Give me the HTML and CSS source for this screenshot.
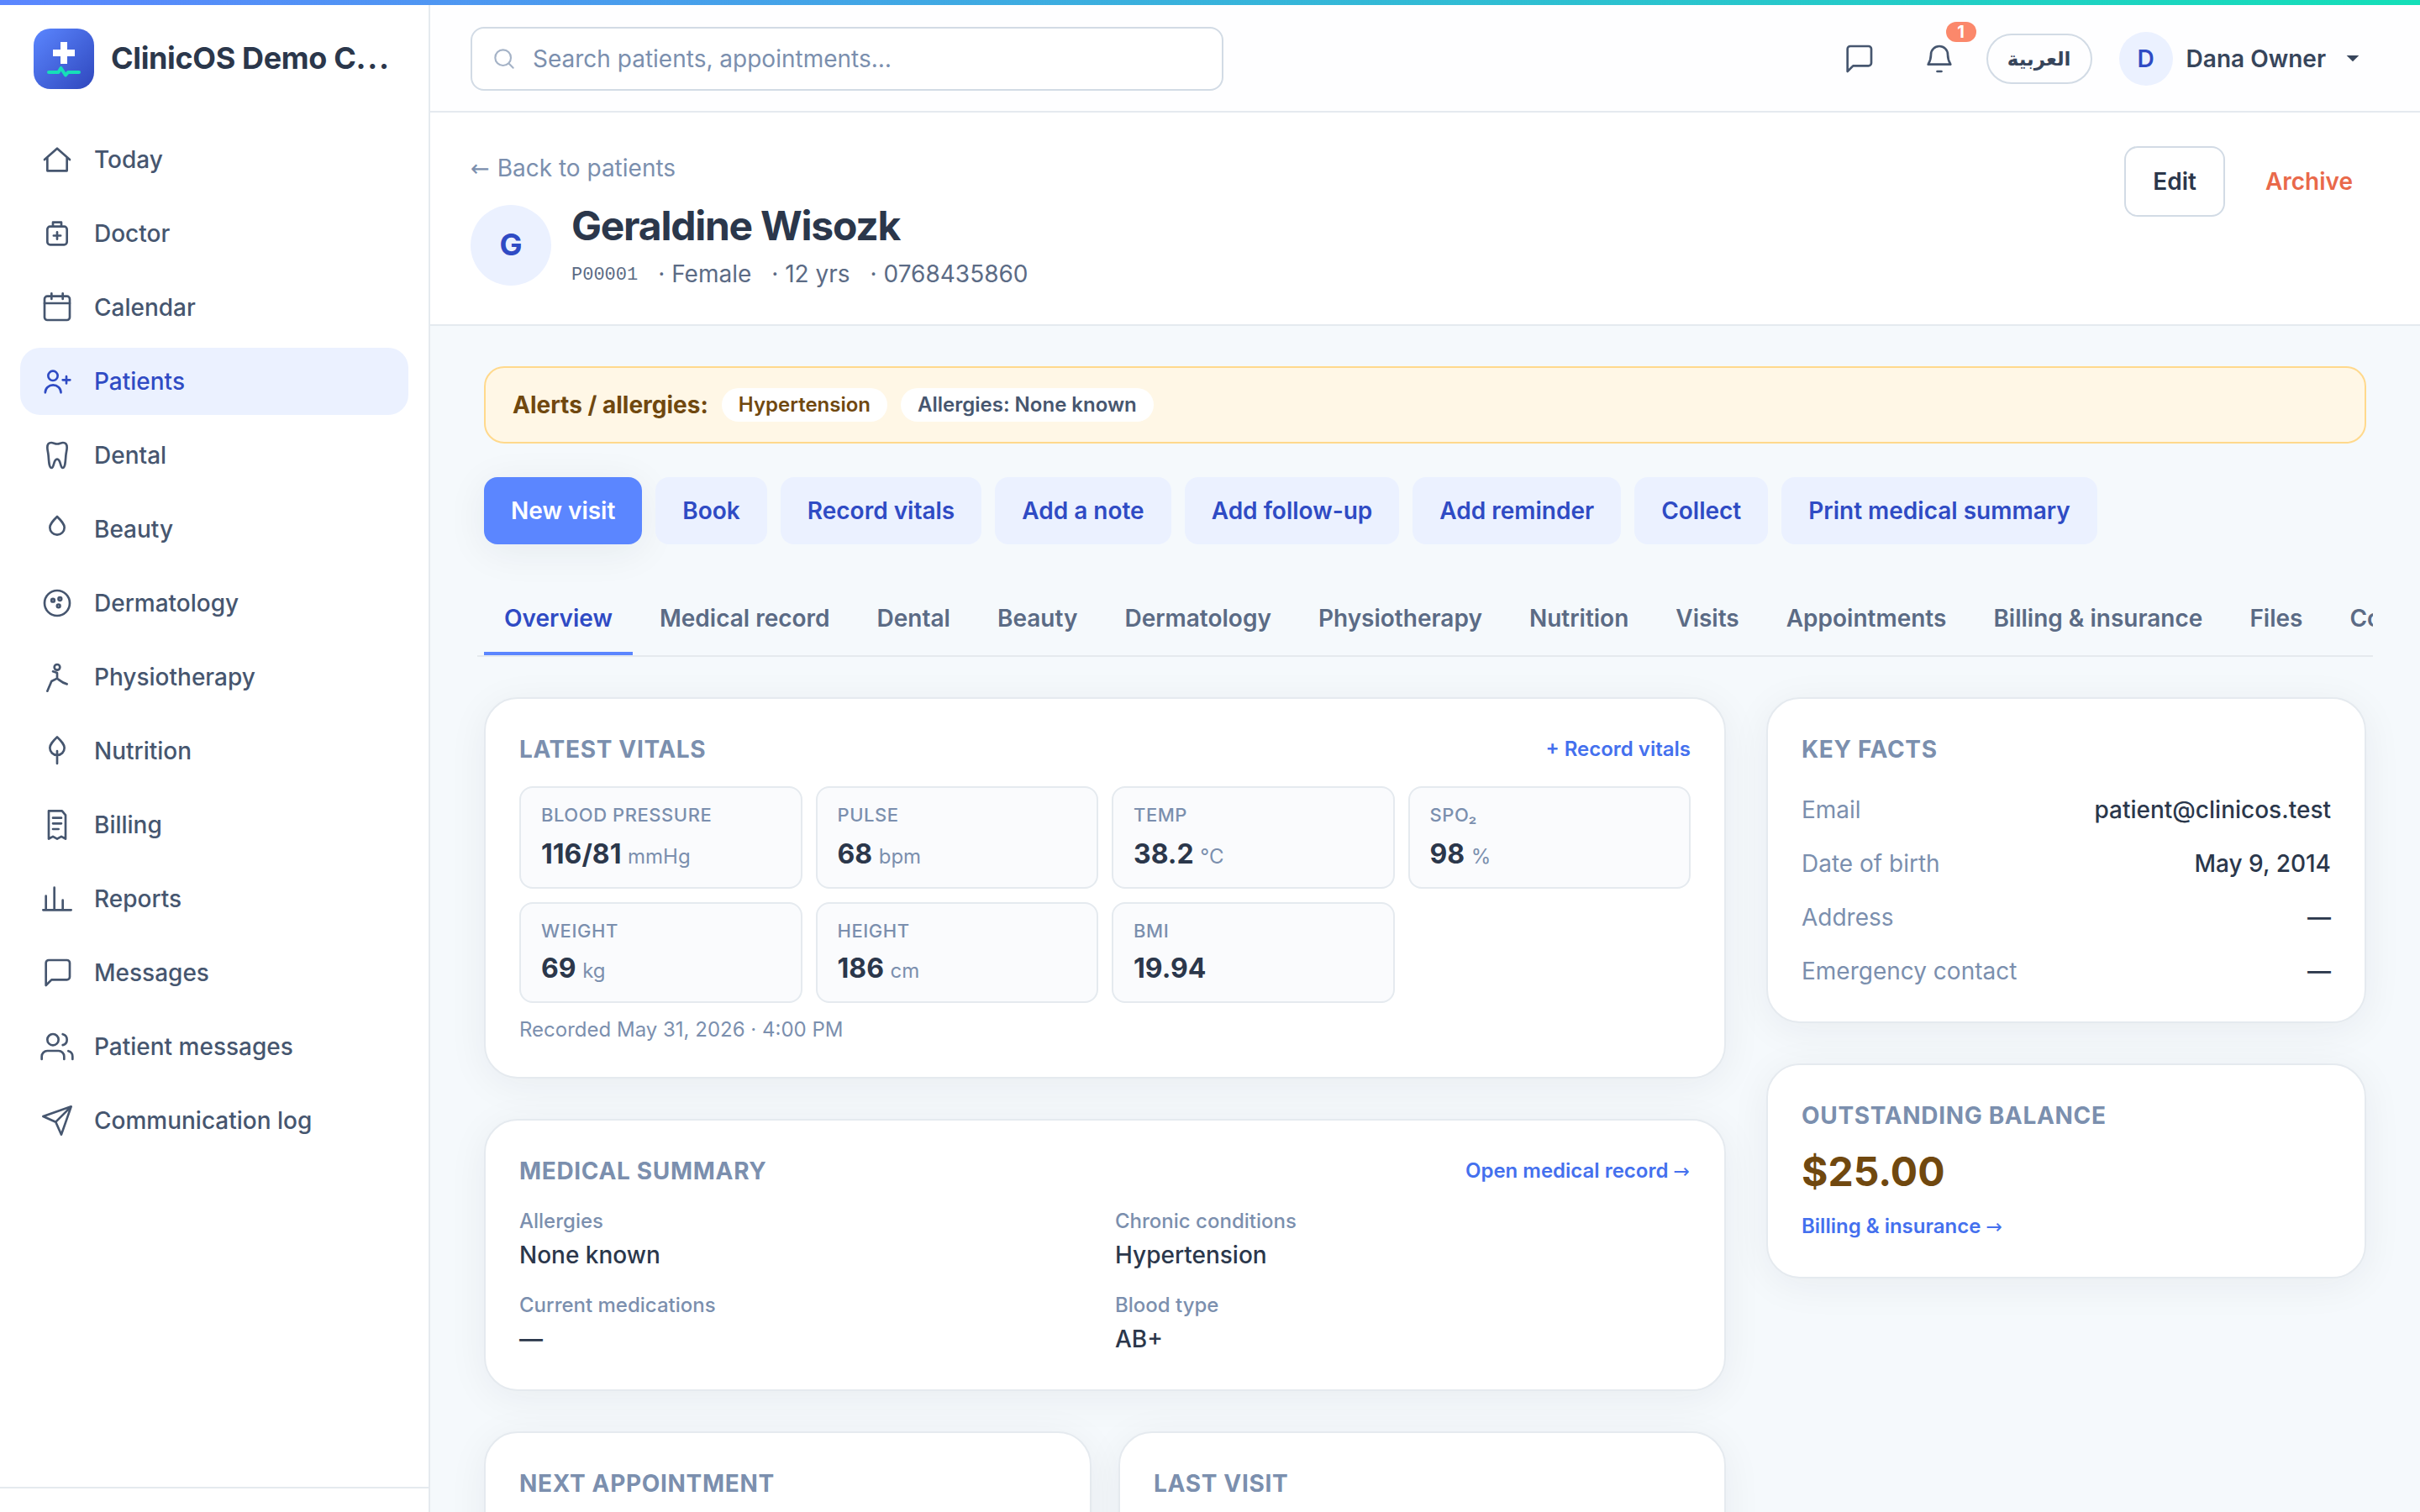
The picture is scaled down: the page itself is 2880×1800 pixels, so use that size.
FILE: index.html
```html
<!DOCTYPE html>
<html lang="en">
  <head>
    <meta charset="UTF-8" />
    <meta name="viewport" content="width=device-width,initial-scale=1" />
    <title>Geraldine Wisozk - ClinicOS</title>
    <link rel="stylesheet" href="styles.css">
  </head>
  <body>
    <div class="accent-bar"></div>
    <div class="app">
      <aside class="sidebar">
        <div class="brand">
          <svg class="brand-logo" viewBox="0 0 72 72">
            <defs>
              <linearGradient id="logo" x1="0" y1="0" x2="1" y2="1">
                <stop offset="0" stop-color="#5b86ff" />
                <stop offset="1" stop-color="#2f47bd" />
              </linearGradient>
            </defs>
            <rect width="72" height="72" rx="20" fill="url(#logo)" />
            <path d="M32 16h8v9h9v8h-9v9h-8v-9h-9v-8h9z" fill="#fff" />
            <path d="M18 52h11.5l3-5 5.5 8.5 3-3.5h13" fill="none" stroke="#16dfb8" stroke-width="4" stroke-linecap="round" stroke-linejoin="round" />
          </svg>
          <span class="brand-name">ClinicOS Demo C<span class="dots">...</span></span>
        </div>
        <nav class="nav">
          <a class="nav-item"><svg class="icon" viewBox="0 0 24 24"><path d="M3 12l9-8 9 8M5 10.5V20h14v-9.5" /></svg>Today</a>
          <a class="nav-item"><svg class="icon" viewBox="0 0 24 24"><rect x="5" y="7" width="14" height="13" rx="2" /><path d="M9 7V4h6v3M12 11v5M9.5 13.5h5" /></svg>Doctor</a>
          <a class="nav-item"><svg class="icon" viewBox="0 0 24 24"><rect x="3" y="4" width="18" height="17" rx="2" /><path d="M3 9h18M8 2v4M16 2v4" /></svg>Calendar</a>
          <a class="nav-item active"><svg class="icon" viewBox="0 0 24 24"><circle cx="9" cy="8" r="3.4" /><path d="M3.5 20a5.6 5.4 0 0 1 11.2 0M18.6 8.5v5M16 11h5.2" /></svg>Patients</a>
          <a class="nav-item"><svg class="icon" viewBox="0 0 24 24"><path d="M12 3.9c-1.8 0-2.6-.9-4.2-.9C6 3 5 4.4 5 6.4c0 2 .6 3.6.8 6.1C6.1 16.5 6.3 21 8 21c2 0 1.2-6.2 4-6.2S14 21 16 21c1.7 0 1.9-4.5 2.2-8.5.2-2.5.8-4.1.8-6.1 0-2-1-3.4-2.8-3.4-1.6 0-2.4.9-4.2.9z" /></svg>Dental</a>
          <a class="nav-item"><svg class="icon" viewBox="0 0 24 24"><path d="M12 3c3 3 5.2 5.2 5.2 7.8a5.2 5.2 0 0 1-10.4 0C6.8 8.2 9 6 12 3z" /></svg>Beauty</a>
          <a class="nav-item"><svg class="icon" viewBox="0 0 24 24"><circle cx="12" cy="12" r="9" /><circle cx="9" cy="10" r="1.1" /><circle cx="14" cy="9" r="1.1" /><circle cx="13" cy="14" r="1.1" /></svg>Dermatology</a>
          <a class="nav-item"><svg class="icon" viewBox="0 0 24 24"><circle cx="12" cy="5" r="2" /><path d="M9 8l3 1v4M12 13l-4 2-3 7M12 13c2 1.5 3.5 3.2 7 4" /></svg>Physiotherapy</a>
          <a class="nav-item"><svg class="icon" viewBox="0 0 24 24"><path d="M12 2c3 3 5.2 5.2 5.2 7.8a5.2 5.2 0 0 1-10.4 0C6.8 7.2 9 5 12 2zM12 12v9" /></svg>Nutrition</a>
          <a class="nav-item"><svg class="icon" viewBox="0 0 24 24"><path d="M6 2h9.5L18 5v17l-3-1.7-3 1.7-3-1.7L6 22zM9 7h6M9 11h6M9 15h4" /></svg>Billing</a>
          <a class="nav-item"><svg class="icon" viewBox="0 0 24 24"><path d="M2 20h20M4 20V10M10 20V4M16 20v-7" /></svg>Reports</a>
          <a class="nav-item"><svg class="icon" viewBox="0 0 24 24"><path d="M21 15a2 2 0 0 1-2 2H8l-4 4V5a2 2 0 0 1 2-2h13a2 2 0 0 1 2 2z" /></svg>Messages</a>
          <a class="nav-item"><svg class="icon" viewBox="0 0 24 24"><circle cx="9" cy="7" r="4" /><path d="M17 21v-2a4 4 0 0 0-4-4H5a4 4 0 0 0-4 4v2M23 21v-2a4 4 0 0 0-3-3.87M16 3.13a4 4 0 0 1 0 7.75" /></svg>Patient messages</a>
          <a class="nav-item"><svg class="icon" viewBox="0 0 24 24"><path d="M22 2l-7 20-4-9-9-4zM22 2L11 13" /></svg>Communication log</a>
        </nav>
        <div class="sidebar-footer"></div>
      </aside>

      <div class="main">
        <header class="topbar">
          <div class="search">
            <svg class="icon search-icon" viewBox="0 0 24 24"><circle cx="11" cy="11" r="7" /><path d="M20 20l-3.5-3.5" /></svg>
            <span>Search patients, appointments…</span>
          </div>
          <div class="topbar-actions">
            <div class="icon-btn"><svg class="icon" viewBox="0 0 24 24"><path d="M21 15a2 2 0 0 1-2 2H8l-4 4V5a2 2 0 0 1 2-2h13a2 2 0 0 1 2 2z" /></svg></div>
            <div class="icon-btn">
              <svg class="icon" viewBox="0 0 24 24"><path d="M6 9a6 6 0 0 1 12 0c0 3.5.8 5 2 7H4c1.2-2 2-3.5 2-7zM10.5 21h3" /></svg>
              <span class="badge">1</span>
            </div>
            <div class="lang" lang="ar">العربية</div>
            <div class="user">
              <span class="user-avatar">D</span>
              <span class="user-name">Dana Owner</span>
              <svg class="caret" viewBox="0 0 24 24"><path d="M6.5 9h11L12 14.500z" /></svg>
            </div>
          </div>
        </header>

        <section class="page-header">
          <div>
            <a class="back"><span class="arrow">←</span> Back to patients</a>
            <div class="patient">
              <div class="patient-avatar">G</div>
              <div>
                <h1 class="patient-name">Geraldine Wisozk</h1>
                <div class="patient-meta">
                  <span class="patient-code">P00001</span>
                  <span>· Female</span>
                  <span>· 12 yrs</span>
                  <span>· 0768435860</span>
                </div>
              </div>
            </div>
          </div>
          <div class="header-actions">
            <a class="btn-outline">Edit</a>
            <a class="btn-danger">Archive</a>
          </div>
        </section>

        <main class="content">
          <div class="alert">
            <strong>Alerts / allergies:</strong>
            <span class="chip chip-warning">Hypertension</span>
            <span class="chip">Allergies: None known</span>
          </div>

          <div class="actions">
            <a class="btn btn-primary">New visit</a>
            <a class="btn">Book</a>
            <a class="btn">Record vitals</a>
            <a class="btn">Add a note</a>
            <a class="btn">Add follow-up</a>
            <a class="btn">Add reminder</a>
            <a class="btn">Collect</a>
            <a class="btn">Print medical summary</a>
          </div>

          <div class="tabs">
            <a class="tab active">Overview</a>
            <a class="tab">Medical record</a>
            <a class="tab">Dental</a>
            <a class="tab">Beauty</a>
            <a class="tab">Dermatology</a>
            <a class="tab">Physiotherapy</a>
            <a class="tab">Nutrition</a>
            <a class="tab">Visits</a>
            <a class="tab">Appointments</a>
            <a class="tab">Billing &amp; insurance</a>
            <a class="tab">Files</a>
            <a class="tab">Communication</a>
          </div>

          <div class="columns">
            <div class="col">
              <div class="card">
                <div class="card-head">
                  <h2 class="card-title">Latest vitals</h2>
                  <a class="link">+ Record vitals</a>
                </div>
                <div class="vitals">
                  <div class="vital"><div class="vital-label">Blood pressure</div><div class="vital-value">116/81 <small>mmHg</small></div></div>
                  <div class="vital"><div class="vital-label">Pulse</div><div class="vital-value">68 <small>bpm</small></div></div>
                  <div class="vital"><div class="vital-label">Temp</div><div class="vital-value">38.2 <small>°C</small></div></div>
                  <div class="vital"><div class="vital-label">SpO₂</div><div class="vital-value">98 <small>%</small></div></div>
                  <div class="vital"><div class="vital-label">Weight</div><div class="vital-value">69 <small>kg</small></div></div>
                  <div class="vital"><div class="vital-label">Height</div><div class="vital-value">186 <small>cm</small></div></div>
                  <div class="vital"><div class="vital-label">BMI</div><div class="vital-value">19.94</div></div>
                </div>
                <div class="recorded">Recorded May 31, 2026 · 4:00 PM</div>
              </div>

              <div class="card">
                <div class="card-head">
                  <h2 class="card-title">Medical summary</h2>
                  <a class="link">Open medical record <span class="arrow">→</span></a>
                </div>
                <div class="summary">
                  <div><div class="summary-label">Allergies</div><div class="summary-value">None known</div></div>
                  <div><div class="summary-label">Chronic conditions</div><div class="summary-value">Hypertension</div></div>
                  <div><div class="summary-label">Current medications</div><div class="summary-value">—</div></div>
                  <div><div class="summary-label">Blood type</div><div class="summary-value">AB+</div></div>
                </div>
              </div>

              <div class="card-pair">
                <div class="card"><h2 class="card-title">Next appointment</h2></div>
                <div class="card"><h2 class="card-title">Last visit</h2></div>
              </div>
            </div>

            <div class="col">
              <div class="card">
                <h2 class="card-title">Key facts</h2>
                <div class="facts">
                  <div class="fact"><span>Email</span><b>patient@clinicos.test</b></div>
                  <div class="fact"><span>Date of birth</span><b>May 9, 2014</b></div>
                  <div class="fact"><span>Address</span><b>—</b></div>
                  <div class="fact"><span>Emergency contact</span><b>—</b></div>
                </div>
              </div>
              <div class="card">
                <h2 class="card-title">Outstanding balance</h2>
                <div class="balance">$25.00</div>
                <a class="link balance-link">Billing &amp; insurance <span class="arrow">→</span></a>
              </div>
            </div>
          </div>
        </main>
      </div>
    </div>
  </body>
</html>
```

FILE: styles.css
```css
* {
  box-sizing: border-box;
}

body {
  margin: 0;
  height: 1800px;
  overflow: hidden;
  display: flex;
  flex-direction: column;
  font-family: Inter, "DejaVu Sans", sans-serif;
  font-size: 28px;
  line-height: 40px;
  color: #2b374b;
  background: #f5f9fc;
}

h1,
h2 {
  margin: 0;
}

.accent-bar {
  height: 6px;
  flex: none;
  background: linear-gradient(90deg, #5b86ff, #14dfb8);
}

.app {
  display: flex;
  flex: 1;
  min-height: 0;
}

.icon {
  width: 40px;
  height: 40px;
  flex: none;
  fill: none;
  stroke: currentColor;
  stroke-width: 1.6;
  stroke-linecap: round;
  stroke-linejoin: round;
}

.arrow {
  margin-right: 1px;
  font-family: "DejaVu Sans", sans-serif;
  font-size: 0.97em;
  font-weight: 400;
  line-height: 1;
}

/* sidebar */

.sidebar {
  width: 512px;
  flex: none;
  display: flex;
  flex-direction: column;
  background: #fff;
  border-right: 2px solid #e5eaef;
}

.brand {
  display: flex;
  align-items: center;
  gap: 20px;
  padding: 28px 40px 44px;
}

.brand-logo {
  width: 72px;
  height: 72px;
  flex: none;
}

.brand-name {
  margin-bottom: 3px;
  font-size: 36px;
  font-weight: 700;
  letter-spacing: -0.01em;
  white-space: nowrap;
}

.dots {
  letter-spacing: 0.05em;
}

.nav {
  display: flex;
  flex-direction: column;
  gap: 8px;
  padding: 0 24px;
  flex: 1;
}

.nav-item {
  display: flex;
  align-items: center;
  gap: 24px;
  height: 80px;
  padding: 0 24px;
  border-radius: 24px;
  font-weight: 500;
  color: #46566f;
}

.nav-item.active {
  color: #2f4bc4;
  background: #ebf1ff;
}

.sidebar-footer {
  height: 30px;
  border-top: 2px solid #e5eaef;
}

/* top bar */

.main {
  flex: 1;
  min-width: 0;
}

.topbar {
  display: flex;
  align-items: center;
  justify-content: space-between;
  height: 128px;
  padding: 2px 48px 0;
  background: #fefeff;
  border-bottom: 2px solid #e5eaef;
}

.search {
  display: flex;
  align-items: center;
  gap: 18px;
  width: 896px;
  height: 76px;
  padding: 0 22px;
  border: 2px solid #d2dbe5;
  border-radius: 16px;
  background: #fff;
  color: #7b8fae;
}

.search-icon {
  width: 32px;
  height: 32px;
  color: #a5b3c7;
}

.topbar-actions {
  display: flex;
  align-items: center;
  gap: 16px;
}

.icon-btn {
  position: relative;
  display: flex;
  align-items: center;
  justify-content: center;
  width: 80px;
  height: 80px;
  color: #46566f;
}

.badge {
  position: absolute;
  top: -4px;
  right: -4px;
  width: 36px;
  height: 24px;
  border-radius: 12px;
  background: #fb886b;
  color: #fff;
  font-size: 20px;
  font-weight: 700;
  line-height: 24px;
  text-align: center;
}

.lang {
  width: 126px;
  height: 60px;
  border: 2px solid #d2dbe5;
  border-radius: 30px;
  font-family: "DejaVu Sans", sans-serif;
  font-size: 23px;
  font-weight: 600;
  line-height: 56px;
  text-align: center;
  color: #37455b;
}

.user {
  display: flex;
  align-items: center;
  gap: 16px;
  padding: 0 16px;
  color: #37455b;
}

.user-avatar {
  width: 64px;
  height: 64px;
  border-radius: 50%;
  background: #ebf1ff;
  color: #2f4bc4;
  font-weight: 600;
  line-height: 64px;
  text-align: center;
}

.user-name {
  font-weight: 600;
}

.caret {
  width: 32px;
  height: 32px;
  fill: currentColor;
}

/* page header */

.page-header {
  display: flex;
  justify-content: space-between;
  padding: 40px 46px 40px 48px;
  background: #fff;
  border-bottom: 2px solid #e5eaef;
}

.back {
  display: block;
  height: 40px;
  margin: 6px 0 18px;
  color: #7b8fae;
}

.patient {
  display: flex;
  align-items: center;
  gap: 24px;
}

.patient-avatar {
  width: 96px;
  height: 96px;
  border-radius: 50%;
  background: #ebf1ff;
  color: #2f4bc4;
  font-size: 36px;
  font-weight: 700;
  line-height: 95px;
  text-align: center;
}

.patient-name {
  margin-bottom: 6px;
  font-size: 48px;
  font-weight: 700;
  line-height: 62px;
  letter-spacing: -0.026em;
}

.patient-meta {
  display: flex;
  align-items: center;
  gap: 24px;
  height: 40px;
  color: #5b6b85;
}

.patient-code {
  padding-top: 3px;
  font-family: "Liberation Mono", monospace;
  font-size: 22px;
}

.header-actions {
  display: flex;
  align-items: flex-start;
  gap: 14px;
  font-weight: 600;
}

.btn-outline,
.btn-danger {
  height: 84px;
  padding: 0 32px;
  border: 2px solid transparent;
  border-radius: 16px;
  line-height: 80px;
}

.btn-outline {
  border-color: #d2dbe5;
}

.btn-danger {
  color: #e9694a;
}

/* content */

.content {
  padding: 48px 64px;
}

.alert {
  display: flex;
  align-items: center;
  gap: 16px;
  height: 92px;
  padding: 0 32px;
  border: 2px solid #ffd98c;
  border-radius: 24px;
  background: #fff7e6;
  color: #70480f;
}

.alert strong {
  font-weight: 700;
}

.chip {
  padding: 0 20px;
  border-radius: 20px;
  background: #fff;
  font-size: 24px;
  font-weight: 600;
  color: #46566f;
}

.chip-warning {
  color: #70480f;
}

.actions {
  display: flex;
  gap: 16px;
  margin-top: 40px;
}

.btn {
  height: 80px;
  padding: 0 32px;
  border-radius: 16px;
  background: #ebf1ff;
  color: #2f4bc4;
  font-weight: 600;
  line-height: 80px;
}

.btn-primary {
  background: #5b86ff;
  color: #fff;
  box-shadow: 0 8px 48px rgba(30, 41, 59, 0.07);
}

.tabs {
  display: flex;
  gap: 8px;
  margin: 40px -8px 48px;
  padding: 0 8px;
  overflow: hidden;
  border-bottom: 2px solid #e5eaee;
}

.tab {
  flex: none;
  height: 92px;
  padding: 28px 24px 0;
  border-bottom: 4px solid transparent;
  font-weight: 600;
  white-space: nowrap;
  color: #5b6b85;
}

.tab.active {
  color: #2f4bc4;
  border-color: #5b86ff;
}

.columns {
  display: grid;
  grid-template-columns: minmax(0, 1fr) 714px;
  gap: 48px;
  align-items: start;
}

.col {
  display: flex;
  flex-direction: column;
  gap: 48px;
}

.card {
  padding: 40px;
  border: 2px solid #e5eaef;
  border-radius: 40px;
  background: #fff;
  box-shadow: 0 8px 48px rgba(30, 41, 59, 0.06);
}

.card-head {
  display: flex;
  align-items: center;
  justify-content: space-between;
  height: 40px;
  margin-bottom: 24px;
}

.card-title {
  font-size: 28px;
  font-weight: 700;
  line-height: 40px;
  letter-spacing: 0.024em;
  text-transform: uppercase;
  color: #7b8fae;
}

.link {
  font-size: 24px;
  font-weight: 600;
  line-height: 32px;
  color: #4470ee;
}

.vitals {
  display: grid;
  grid-template-columns: repeat(4, 1fr);
  grid-template-rows: 122px 120px;
  gap: 16px;
}

.vital {
  display: flex;
  flex-direction: column;
  justify-content: space-between;
  padding: 16px 24px;
  border: 2px solid #e5eaef;
  border-radius: 16px;
  background: #fafbfd;
}

.vital-label {
  height: 32px;
  font-size: 22px;
  font-weight: 500;
  line-height: 32px;
  letter-spacing: 0.025em;
  text-transform: uppercase;
  color: #7b8fae;
}

.vital-value {
  height: 48px;
  font-size: 32px;
  font-weight: 700;
  line-height: 50px;
}

.vital-value small {
  font-size: 24px;
  font-weight: 400;
  line-height: 1;
  color: #7b8fae;
}

.recorded {
  margin-top: 16px;
  font-size: 24px;
  line-height: 32px;
  color: #7b8fae;
}

.summary {
  display: grid;
  grid-template-columns: 1fr 1fr;
  gap: 24px;
  font-weight: 500;
}

.summary-label {
  margin-bottom: 4px;
  font-size: 24px;
  line-height: 32px;
  color: #7b8fae;
}

.card-pair {
  display: grid;
  grid-template-columns: 1fr 1fr;
  gap: 32px;
}

.card-pair .card {
  height: 300px;
}

.facts {
  display: flex;
  flex-direction: column;
  gap: 24px;
  margin-top: 32px;
}

.fact {
  display: flex;
  justify-content: space-between;
  color: #7b8fae;
}

.fact b {
  font-weight: 500;
  color: #2b374b;
}

.balance {
  margin: 17px 0 19px;
  font-size: 48px;
  font-weight: 700;
  line-height: 60px;
  color: #70480f;
}

.balance-link {
  display: block;
  height: 32px;
  margin-bottom: 4px;
}
```
